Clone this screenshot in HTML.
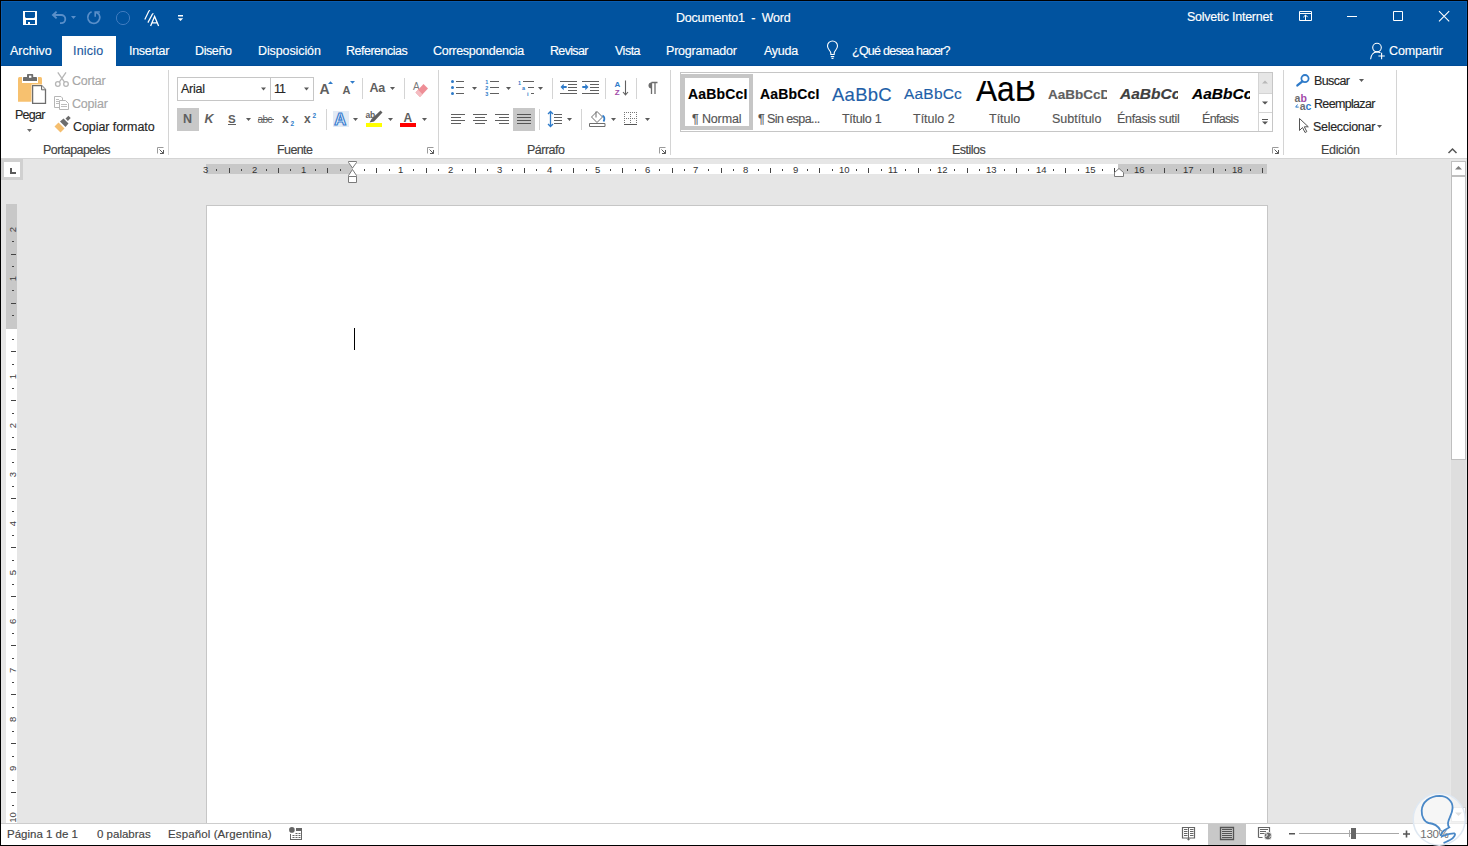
<!DOCTYPE html>
<html><head><meta charset="utf-8"><title>Documento1 - Word</title>
<style>
html,body{margin:0;padding:0;}
body{width:1468px;height:846px;overflow:hidden;position:relative;background:#000;font-family:"Liberation Sans",sans-serif;}
.b{position:absolute;}
.t{position:absolute;white-space:pre;font-family:"Liberation Sans",sans-serif;-webkit-text-stroke:0.15px currentColor;}
svg{position:absolute;left:0;top:0;}
</style></head><body>
<div class=b style="left:1px;top:1px;width:1466px;height:844px;background:#ffffff;"></div>
<div class=b style="left:1px;top:1px;width:1466px;height:65px;background:#01539f;"></div>
<div class=b style="left:1px;top:1px;width:1466px;height:1px;background:#0a5cb0;"></div>
<div class=b style="left:1466px;top:1px;width:1px;height:65px;background:#0a5cb0;"></div>
<div class=b style="left:1px;top:1px;width:1px;height:65px;background:#0a5cb0;"></div>
<div class=b style="left:1px;top:65px;width:1466px;height:1px;background:#004c98;"></div>
<div class=b style="left:62px;top:36px;width:54px;height:30px;background:#ffffff;"></div>
<div class=b style="left:1px;top:158px;width:1466px;height:1px;background:#d4d4d4;"></div>
<div class=b style="left:1px;top:159px;width:1466px;height:664px;background:#e6e6e6;"></div>
<div class=b style="left:1px;top:823px;width:1466px;height:1px;background:#cdcdcd;"></div>
<div class=b style="left:1px;top:824px;width:1466px;height:21px;background:#ffffff;"></div>
<div class=b style="left:206px;top:205px;width:1062px;height:618px;background:#c6c6c6;"></div>
<div class=b style="left:207px;top:206px;width:1060px;height:617px;background:#ffffff;"></div>
<div class=b style="left:354px;top:328px;width:1px;height:22px;background:#000000;"></div>
<div class=b style="left:1px;top:159px;width:22px;height:21px;background:#d0d0d0;"></div>
<div class=b style="left:4px;top:162px;width:16px;height:15px;background:#ffffff;"></div>
<div class=b style="left:206px;top:164px;width:1061px;height:10px;background:#c8c8c8;"></div>
<div class=b style="left:353px;top:164px;width:765px;height:10px;background:#ffffff;"></div>
<div class=b style="left:6px;top:204px;width:11px;height:619px;background:#c8c8c8;"></div>
<div class=b style="left:6px;top:329px;width:11px;height:494px;background:#ffffff;"></div>
<div class=b style="left:1450px;top:159px;width:16px;height:664px;background:#e8e8e8;"></div>
<div class=b style="left:1451px;top:161px;width:15px;height:15px;background:#bfbfbf;"></div>
<div class=b style="left:1452px;top:162px;width:13px;height:13px;background:#ffffff;"></div>
<div class=b style="left:1451px;top:176px;width:15px;height:647px;background:#dedede;"></div>
<div class=b style="left:1451px;top:176px;width:15px;height:284px;background:#bfbfbf;"></div>
<div class=b style="left:1452px;top:177px;width:13px;height:282px;background:#ffffff;"></div>
<div class=b style="left:1451px;top:807px;width:15px;height:15px;background:#cfcfcf;"></div>
<div class=b style="left:1452px;top:808px;width:13px;height:13px;background:#ffffff;"></div>
<div class=b style="left:168px;top:70px;width:1px;height:85px;background:#d4d4d4;"></div>
<div class=b style="left:438px;top:70px;width:1px;height:85px;background:#d4d4d4;"></div>
<div class=b style="left:670px;top:70px;width:1px;height:85px;background:#d4d4d4;"></div>
<div class=b style="left:1283px;top:70px;width:1px;height:85px;background:#d4d4d4;"></div>
<div class=b style="left:1396px;top:70px;width:1px;height:85px;background:#d4d4d4;"></div>
<div class=b style="left:362px;top:78px;width:1px;height:21px;background:#d4d4d4;"></div>
<div class=b style="left:404px;top:78px;width:1px;height:21px;background:#d4d4d4;"></div>
<div class=b style="left:326px;top:109px;width:1px;height:21px;background:#d4d4d4;"></div>
<div class=b style="left:552px;top:78px;width:1px;height:21px;background:#d4d4d4;"></div>
<div class=b style="left:605px;top:78px;width:1px;height:21px;background:#d4d4d4;"></div>
<div class=b style="left:636px;top:78px;width:1px;height:21px;background:#d4d4d4;"></div>
<div class=b style="left:539px;top:109px;width:1px;height:21px;background:#d4d4d4;"></div>
<div class=b style="left:581px;top:109px;width:1px;height:21px;background:#d4d4d4;"></div>
<div class=b style="left:177px;top:77px;width:94px;height:24px;background:#c6c6c6;"></div>
<div class=b style="left:178px;top:78px;width:92px;height:22px;background:#ffffff;"></div>
<div class=b style="left:270px;top:77px;width:44px;height:24px;background:#c6c6c6;"></div>
<div class=b style="left:271px;top:78px;width:42px;height:22px;background:#ffffff;"></div>
<div class=b style="left:177px;top:108px;width:22px;height:23px;background:#c8c8c8;"></div>
<div class=b style="left:513px;top:108px;width:22px;height:23px;background:#c8c8c8;"></div>
<div class=b style="left:680px;top:72px;width:593px;height:60px;background:#c6c6c6;"></div>
<div class=b style="left:681px;top:73px;width:591px;height:58px;background:#ffffff;"></div>
<div class=b style="left:681px;top:74px;width:72px;height:56px;background:#c6c6c6;"></div>
<div class=b style="left:685px;top:78px;width:64px;height:48px;background:#ffffff;"></div>
<div class=b style="left:1258px;top:73px;width:1px;height:58px;background:#d4d4d4;"></div>
<div class=b style="left:1259px;top:73px;width:13px;height:21px;background:#e6e6e6;"></div>
<div class=b style="left:1259px;top:93px;width:13px;height:1px;background:#d4d4d4;"></div>
<div class=b style="left:1259px;top:112px;width:13px;height:1px;background:#d4d4d4;"></div>
<div class=b style="left:1208px;top:824px;width:38px;height:21px;background:#c8c8c8;"></div>
<svg width="1468" height="846" viewBox="0 0 1468 846" shape-rendering="auto">
<rect x="23" y="11" width="14" height="14" fill="#ffffff"/>
<path d="M25 12h10v5l-1 1h-8l-1-1z" fill="#01539f" />
<rect x="26" y="20" width="9" height="4" fill="#01539f"/>
<rect x="28" y="22" width="2" height="2" fill="#ffffff"/>
<path d="M53 15h8.2a4.1 4.1 0 0 1 0 8.2h-1.2" fill="none" stroke="#5a8fc9" stroke-width="1.8" />
<path d="M56.6 11.6l-3.6 3.4 3.6 3.4" fill="none" stroke="#5a8fc9" stroke-width="1.9" />
<path d="M71 16h5l-2.5 3z" fill="#5a8fc9" />
<path d="M91.6 11.8A6 6 0 1 0 99 14.4L96.2 12.4" fill="none" stroke="#5a8fc9" stroke-width="1.7" />
<path d="M95.2 16.8V12H99.8" fill="none" stroke="#5a8fc9" stroke-width="1.6" />
<circle cx="123" cy="18" r="6.6" fill="none" stroke="#3f7bbf" stroke-width="1"/>
<path d="M144.8 19.5l4-8.2c.3-.6.8-.8 1.2-.5" fill="none" stroke="#ffffff" stroke-width="1.2" />
<path d="M147.9 22.6l4.4-8.2c.3-.6.8-.8 1.2-.5" fill="none" stroke="#ffffff" stroke-width="1.2" />
<path d="M150.6 26l4-9.5 4 9.5M151.9 22.8h5.4" fill="none" stroke="#ffffff" stroke-width="1.3" />
<rect x="178" y="15" width="5" height="1.5" fill="#ffffff"/>
<path d="M177.8 18.2h5.4l-2.7 2.9z" fill="#ffffff" />
<path d="M1299.5 11.5h12v9h-12zM1299.5 13.5h12" fill="none" stroke="#ffffff" stroke-width="1" />
<path d="M1305.5 20v-5M1303.3 17.2l2.2-2.2 2.2 2.2" fill="none" stroke="#ffffff" stroke-width="1" />
<rect x="1347" y="16" width="10" height="1" fill="#ffffff"/>
<path d="M1393.5 11.5h9v9h-9z" fill="none" stroke="#ffffff" stroke-width="1" />
<path d="M1439 11.2l10.2 10.2M1449.2 11.2l-10.2 10.2" fill="none" stroke="#ffffff" stroke-width="1.1" />
<path d="M830.8 54.5v-1.6c0-1.8-3.3-3.6-3.3-6.9a5 5 0 0 1 10 0c0 3.3-3.3 5.1-3.3 6.9v1.6z" fill="none" stroke="#ffffff" stroke-width="1.1" />
<path d="M830.8 56.6h3.4M831.5 58.5h2" fill="none" stroke="#ffffff" stroke-width="1.1" />
<circle cx="1377" cy="47.6" r="4.3" fill="none" stroke="#ffffff" stroke-width="1.1"/>
<path d="M1370.6 59.2c.4-4.6 3.2-7.3 6.4-7.3 1.3 0 2.5.3 3.4.9" fill="none" stroke="#ffffff" stroke-width="1.1" />
<path d="M1381.6 52.8v6.4M1378.4 56h6.4" fill="none" stroke="#ffffff" stroke-width="1.1" />
<path d="M19.5 77h21a1.5 1.5 0 0 1 1.5 1.5v23.3h-24v-23.3a1.5 1.5 0 0 1 1.5-1.5z" fill="#f7c16f" />
<rect x="22" y="77" width="16" height="6" fill="#ffffff"/>
<path d="M23 81v-3.2c0-.5.3-.8.8-.8h3.2v-2.2c0-.4.3-.8.8-.8h4.6c.4 0 .8.4.8.8v2.2h3c.5 0 .8.3.8.8v3.2z" fill="#6d6d6d" />
<rect x="29" y="75.6" width="2.4" height="2.2" fill="#ffffff"/>
<path d="M31.5 84.5h10.5l4.5 4.5v15.5h-15z" fill="#ffffff" />
<path d="M32.6 85.6h9.1l3.8 3.8v14h-12.9z" fill="#ffffff" stroke="#6d6d6d" stroke-width="1.3" />
<path d="M41.5 85.6v4.2h4.2" fill="#e8e8e8" stroke="#6d6d6d" stroke-width="1" />
<path d="M27 129h5l-2.5 3z" fill="#6d6d6d" />
<circle cx="57.8" cy="84" r="2.3" fill="none" stroke="#b6b6b6" stroke-width="1.3"/><circle cx="66" cy="84" r="2.3" fill="none" stroke="#b6b6b6" stroke-width="1.3"/>
<path d="M59.3 82.2l6.7-9.8M64.5 82.2l-6.7-9.8" fill="none" stroke="#b6b6b6" stroke-width="1.3" />
<path d="M54.5 96.5h6.5l1.5 1.5v9.5h-8z" fill="#ffffff" stroke="#b6b6b6" stroke-width="1" />
<path d="M59.5 100.5h6l3 3v6h-9z" fill="#ffffff" stroke="#b6b6b6" stroke-width="1" />
<path d="M61 104.5h6M61 106.5h6M56 99.5h3M56 101.5h3M56 103.5h3" fill="none" stroke="#b6b6b6" stroke-width="0.9" />
<path d="M54.5 126.5l4-4 6 6-4 4z" fill="#f5be6e" />
<path d="M60 121.5l3.5-3 5 5-3 3.5z" fill="#6d6d6d" />
<path d="M65.5 118.5l3-2.8 2.2 2.2-2.8 3z" fill="#6d6d6d" />
<path d="M157.5 153.5v-6h6" fill="none" stroke="#9a9a9a" stroke-width="1" />
<path d="M159.5 149.5l4 4M163.5 150v3.5h-3.5" fill="none" stroke="#5a5a5a" stroke-width="1" />
<path d="M427.5 153.5v-6h6" fill="none" stroke="#9a9a9a" stroke-width="1" />
<path d="M429.5 149.5l4 4M433.5 150v3.5h-3.5" fill="none" stroke="#5a5a5a" stroke-width="1" />
<path d="M659.5 153.5v-6h6" fill="none" stroke="#9a9a9a" stroke-width="1" />
<path d="M661.5 149.5l4 4M665.5 150v3.5h-3.5" fill="none" stroke="#5a5a5a" stroke-width="1" />
<path d="M1272.5 153.5v-6h6" fill="none" stroke="#9a9a9a" stroke-width="1" />
<path d="M1274.5 149.5l4 4M1278.5 150v3.5h-3.5" fill="none" stroke="#5a5a5a" stroke-width="1" />
<path d="M261 87.5h5l-2.5 2.9z" fill="#5a5a5a" />
<path d="M304 87.5h5l-2.5 2.9z" fill="#5a5a5a" />
<path d="M390 87h5l-2.5 2.9z" fill="#5a5a5a" />
<path d="M246 118h5l-2.5 2.9z" fill="#5a5a5a" />
<path d="M353 118h5l-2.5 2.9z" fill="#5a5a5a" />
<path d="M388 118h5l-2.5 2.9z" fill="#5a5a5a" />
<path d="M422 118h5l-2.5 2.9z" fill="#5a5a5a" />
<path d="M472 87h5l-2.5 2.9z" fill="#5a5a5a" />
<path d="M506 87h5l-2.5 2.9z" fill="#5a5a5a" />
<path d="M538 87h5l-2.5 2.9z" fill="#5a5a5a" />
<path d="M567 118h5l-2.5 2.9z" fill="#5a5a5a" />
<path d="M611 118h5l-2.5 2.9z" fill="#5a5a5a" />
<path d="M645 118h5l-2.5 2.9z" fill="#5a5a5a" />
<path d="M1359 79h5l-2.5 2.9z" fill="#5a5a5a" />
<path d="M1377 125h5l-2.5 2.9z" fill="#5a5a5a" />
<text x="319.6" y="94" font-family="Liberation Sans" font-size="14" font-weight="700" font-style="normal" fill="#5f5f5f" letter-spacing="0">A</text>
<path d="M328 84h5l-2.5-2.8z" fill="#2f7bc9" />
<text x="342.6" y="94" font-family="Liberation Sans" font-size="11" font-weight="700" font-style="normal" fill="#5f5f5f" letter-spacing="0">A</text>
<path d="M350 81h5l-2.5 2.8z" fill="#2f7bc9" />
<text x="369.6" y="92" font-family="Liberation Sans" font-size="12.5" font-weight="700" font-style="normal" fill="#5f5f5f" letter-spacing="-0.3">Aa</text>
<text x="413" y="89.5" font-family="Liberation Sans" font-size="10" font-weight="400" font-style="normal" fill="#7a7a7a" letter-spacing="0">A</text>
<path d="M415.5 92.5l8-8.5 4.5 4.5-8 8.5z" fill="#ee8e96" />
<path d="M415.5 92.5l2.6-2.7 4.4 4.4-2.6 2.7z" fill="#f4bcc1" />
<text x="183" y="123" font-family="Liberation Sans" font-size="12.5" font-weight="700" font-style="normal" fill="#5f5f5f" letter-spacing="0">N</text>
<text x="204.5" y="123" font-family="Liberation Sans" font-size="12.5" font-weight="700" font-style="italic" fill="#5f5f5f" letter-spacing="0">K</text>
<text x="228" y="123" font-family="Liberation Sans" font-size="11.5" font-weight="700" font-style="normal" fill="#5f5f5f" letter-spacing="0">S</text>
<rect x="228" y="124" width="8" height="1" fill="#5f5f5f"/>
<text x="257.5" y="123" font-family="Liberation Sans" font-size="10" font-weight="400" font-style="normal" fill="#5f5f5f" letter-spacing="-0.6">abc</text>
<rect x="258" y="119" width="16" height="1" fill="#5f5f5f"/>
<text x="282" y="123" font-family="Liberation Sans" font-size="12" font-weight="700" font-style="normal" fill="#5f5f5f" letter-spacing="0">x</text>
<text x="290.5" y="125.5" font-family="Liberation Sans" font-size="6.5" font-weight="700" font-style="normal" fill="#2f7bc9" letter-spacing="0">2</text>
<text x="304" y="123" font-family="Liberation Sans" font-size="12" font-weight="700" font-style="normal" fill="#5f5f5f" letter-spacing="0">x</text>
<text x="312.5" y="117.5" font-family="Liberation Sans" font-size="6.5" font-weight="700" font-style="normal" fill="#2f7bc9" letter-spacing="0">2</text>
<rect x="333" y="111" width="16" height="16" fill="#e3ebf5"/>
<text x="334.2" y="125" font-family="Liberation Sans" font-size="16.5" font-weight="700" fill="#ffffff" stroke="#3b7fd0" stroke-width="1.2">A</text>
<text x="365.6" y="117.8" font-family="Liberation Sans" font-size="8.5" font-weight="700" font-style="normal" fill="#5f5f5f" letter-spacing="-0.4">ab</text>
<path d="M369.5 122.5l2-3.5 9-8.5 2 2-8.5 9z" fill="#5f5f5f" />
<rect x="366" y="123" width="16" height="4" fill="#ffff00"/>
<text x="403.5" y="122" font-family="Liberation Sans" font-size="12" font-weight="700" font-style="normal" fill="#5f5f5f" letter-spacing="0">A</text>
<rect x="400" y="123" width="16" height="4" fill="#ff0000"/>
<circle cx="452.5" cy="81.5" r="1.5" fill="#2f7bc9"/>
<circle cx="452.5" cy="87.5" r="1.5" fill="#2f7bc9"/>
<circle cx="452.5" cy="93.5" r="1.5" fill="#2f7bc9"/>
<rect x="456" y="81" width="8" height="1" fill="#606060"/>
<rect x="456" y="87" width="8" height="1" fill="#606060"/>
<rect x="456" y="93" width="8" height="1" fill="#606060"/>
<text x="485.2" y="84" font-family="Liberation Sans" font-size="5.5" font-weight="700" font-style="normal" fill="#2f7bc9" letter-spacing="0">1</text>
<text x="485.2" y="90" font-family="Liberation Sans" font-size="5.5" font-weight="700" font-style="normal" fill="#2f7bc9" letter-spacing="0">2</text>
<text x="485.2" y="96" font-family="Liberation Sans" font-size="5.5" font-weight="700" font-style="normal" fill="#2f7bc9" letter-spacing="0">3</text>
<rect x="490" y="81" width="9" height="1" fill="#606060"/>
<rect x="490" y="87" width="9" height="1" fill="#606060"/>
<rect x="490" y="93" width="9" height="1" fill="#606060"/>
<text x="518" y="84.5" font-family="Liberation Sans" font-size="5.5" font-weight="700" font-style="normal" fill="#2f7bc9" letter-spacing="0">1</text>
<text x="522" y="90" font-family="Liberation Sans" font-size="5.5" font-weight="700" font-style="normal" fill="#2f7bc9" letter-spacing="0">a</text>
<text x="527" y="96" font-family="Liberation Sans" font-size="5.5" font-weight="700" font-style="normal" fill="#2f7bc9" letter-spacing="0">i</text>
<rect x="523" y="81" width="11" height="1" fill="#606060"/>
<rect x="528" y="87" width="6" height="1" fill="#606060"/>
<rect x="531" y="93" width="3" height="1" fill="#606060"/>
<rect x="560" y="81" width="17" height="1" fill="#606060"/>
<rect x="560" y="93" width="17" height="1" fill="#606060"/>
<rect x="568" y="84" width="9" height="1" fill="#606060"/>
<rect x="568" y="87" width="9" height="1" fill="#606060"/>
<rect x="568" y="90" width="9" height="1" fill="#606060"/>
<path d="M560.5 87l3.2-3.2v2.2h3v2h-3v2.2z" fill="#2f7bc9" />
<rect x="582" y="81" width="17" height="1" fill="#606060"/>
<rect x="582" y="93" width="17" height="1" fill="#606060"/>
<rect x="590" y="84" width="9" height="1" fill="#606060"/>
<rect x="590" y="87" width="9" height="1" fill="#606060"/>
<rect x="590" y="90" width="9" height="1" fill="#606060"/>
<path d="M588.5 87l-3.2-3.2v2.2h-3v2h3v2.2z" fill="#2f7bc9" />
<text x="614.6" y="86.8" font-family="Liberation Sans" font-size="8" font-weight="700" font-style="normal" fill="#2f7bc9" letter-spacing="0">A</text>
<text x="614.8" y="94.8" font-family="Liberation Sans" font-size="8" font-weight="700" font-style="normal" fill="#a14aa8" letter-spacing="0">Z</text>
<path d="M625.5 80.5v14M623 92l2.5 2.8 2.5-2.8" fill="none" stroke="#606060" stroke-width="1.1" />
<path d="M651.5 82.5h6M651.5 82.5v11.5M655 82.5v11.5" fill="none" stroke="#6d6d6d" stroke-width="1.3" />
<path d="M651.5 82.5a3 3 0 0 0 0 6z" fill="#6d6d6d" />
<rect x="451" y="114" width="14" height="1" fill="#606060"/>
<rect x="451" y="120" width="14" height="1" fill="#606060"/>
<rect x="451" y="117" width="10" height="1" fill="#606060"/>
<rect x="451" y="123" width="10" height="1" fill="#606060"/>
<rect x="473" y="114" width="14" height="1" fill="#606060"/>
<rect x="473" y="120" width="14" height="1" fill="#606060"/>
<rect x="475" y="117" width="10" height="1" fill="#606060"/>
<rect x="475" y="123" width="10" height="1" fill="#606060"/>
<rect x="495" y="114" width="14" height="1" fill="#606060"/>
<rect x="495" y="120" width="14" height="1" fill="#606060"/>
<rect x="499" y="117" width="10" height="1" fill="#606060"/>
<rect x="499" y="123" width="10" height="1" fill="#606060"/>
<rect x="517" y="114" width="14" height="1" fill="#555"/>
<rect x="517" y="117" width="14" height="1" fill="#555"/>
<rect x="517" y="120" width="14" height="1" fill="#555"/>
<rect x="517" y="123" width="14" height="1" fill="#555"/>
<path d="M550.5 111.5v15M548 114l2.5-2.5 2.5 2.5M548 124l2.5 2.5 2.5-2.5" fill="none" stroke="#2f7bc9" stroke-width="1.3" />
<rect x="554" y="114" width="8" height="1" fill="#606060"/>
<rect x="554" y="117" width="8" height="1" fill="#606060"/>
<rect x="554" y="120" width="8" height="1" fill="#606060"/>
<rect x="554" y="123" width="8" height="1" fill="#606060"/>
<path d="M591.5 117l5.5-5.5 5.5 5.5-5.5 5.5z" fill="#ffffff" stroke="#6d6d6d" stroke-width="1" />
<path d="M596 111.5v6" fill="none" stroke="#6d6d6d" stroke-width="1" />
<path d="M602.5 115.5c2 1 2.5 3.5 1 6" fill="none" stroke="#2f7bc9" stroke-width="1.8" />
<path d="M589.5 123.5h15.5v3h-15.5z" fill="#ffffff" stroke="#6d6d6d" stroke-width="1" />
<rect x="624" y="112" width="1" height="1" fill="#777"/>
<rect x="626" y="112" width="1" height="1" fill="#777"/>
<rect x="628" y="112" width="1" height="1" fill="#777"/>
<rect x="630" y="112" width="1" height="1" fill="#777"/>
<rect x="632" y="112" width="1" height="1" fill="#777"/>
<rect x="634" y="112" width="1" height="1" fill="#777"/>
<rect x="636" y="112" width="1" height="1" fill="#777"/>
<rect x="624" y="114" width="1" height="1" fill="#777"/>
<rect x="630" y="114" width="1" height="1" fill="#777"/>
<rect x="636" y="114" width="1" height="1" fill="#777"/>
<rect x="624" y="116" width="1" height="1" fill="#777"/>
<rect x="630" y="116" width="1" height="1" fill="#777"/>
<rect x="636" y="116" width="1" height="1" fill="#777"/>
<rect x="624" y="118" width="1" height="1" fill="#777"/>
<rect x="626" y="118" width="1" height="1" fill="#777"/>
<rect x="628" y="118" width="1" height="1" fill="#777"/>
<rect x="630" y="118" width="1" height="1" fill="#777"/>
<rect x="632" y="118" width="1" height="1" fill="#777"/>
<rect x="634" y="118" width="1" height="1" fill="#777"/>
<rect x="636" y="118" width="1" height="1" fill="#777"/>
<rect x="624" y="120" width="1" height="1" fill="#777"/>
<rect x="630" y="120" width="1" height="1" fill="#777"/>
<rect x="636" y="120" width="1" height="1" fill="#777"/>
<rect x="624" y="122" width="1" height="1" fill="#777"/>
<rect x="630" y="122" width="1" height="1" fill="#777"/>
<rect x="636" y="122" width="1" height="1" fill="#777"/>
<rect x="624" y="124" width="13" height="1" fill="#555"/>
<path d="M1262 83.5h6l-3-3z" fill="#b8b8b8" />
<path d="M1262 101.5h6l-3 3z" fill="#555" />
<rect x="1262" y="119" width="6" height="1" fill="#555"/>
<path d="M1262 121.5h6l-3 3z" fill="#555" />
<circle cx="1305" cy="78.6" r="3.6" fill="none" stroke="#2f7bc9" stroke-width="1.8"/>
<path d="M1302.4 81.4l-5 4" fill="none" stroke="#2f7bc9" stroke-width="2.4" stroke-linecap="round"/>
<text x="1294.6" y="102.4" font-family="Liberation Sans" font-size="10.5" font-weight="700" font-style="normal" fill="#6d6d6d" letter-spacing="0">a</text>
<text x="1300.6" y="102.4" font-family="Liberation Sans" font-size="10.5" font-weight="700" font-style="normal" fill="#a14aa8" letter-spacing="0">b</text>
<text x="1299.8" y="109.8" font-family="Liberation Sans" font-size="10.5" font-weight="700" font-style="normal" fill="#6d6d6d" letter-spacing="0">a</text>
<text x="1305.6" y="109.8" font-family="Liberation Sans" font-size="10.5" font-weight="700" font-style="normal" fill="#2f7bc9" letter-spacing="0">c</text>
<path d="M1297.5 104.5l-1.8 2.6h3" fill="none" stroke="#2f7bc9" stroke-width="1" />
<path d="M1299.5 118.5v12l3-3 2.5 5 1.8-.9-2.5-4.8h4z" fill="#ffffff" stroke="#555" stroke-width="1" />
<path d="M1448.5 153l4-4 4 4" fill="none" stroke="#555" stroke-width="1.5" />
<rect x="10" y="168" width="2" height="6" fill="#5a5a5a"/>
<rect x="10" y="172" width="6" height="2" fill="#5a5a5a"/>
<rect x="216" y="169" width="1" height="2" fill="#444"/>
<rect x="229" y="168" width="1" height="5" fill="#444"/>
<rect x="241" y="169" width="1" height="2" fill="#444"/>
<rect x="266" y="169" width="1" height="2" fill="#444"/>
<rect x="278" y="168" width="1" height="5" fill="#444"/>
<rect x="290" y="169" width="1" height="2" fill="#444"/>
<rect x="315" y="169" width="1" height="2" fill="#444"/>
<rect x="327" y="168" width="1" height="5" fill="#444"/>
<rect x="340" y="169" width="1" height="2" fill="#444"/>
<rect x="364" y="169" width="1" height="2" fill="#444"/>
<rect x="376" y="168" width="1" height="5" fill="#444"/>
<rect x="389" y="169" width="1" height="2" fill="#444"/>
<rect x="413" y="169" width="1" height="2" fill="#444"/>
<rect x="426" y="168" width="1" height="5" fill="#444"/>
<rect x="438" y="169" width="1" height="2" fill="#444"/>
<rect x="462" y="169" width="1" height="2" fill="#444"/>
<rect x="475" y="168" width="1" height="5" fill="#444"/>
<rect x="487" y="169" width="1" height="2" fill="#444"/>
<rect x="512" y="169" width="1" height="2" fill="#444"/>
<rect x="524" y="168" width="1" height="5" fill="#444"/>
<rect x="536" y="169" width="1" height="2" fill="#444"/>
<rect x="561" y="169" width="1" height="2" fill="#444"/>
<rect x="573" y="168" width="1" height="5" fill="#444"/>
<rect x="586" y="169" width="1" height="2" fill="#444"/>
<rect x="610" y="169" width="1" height="2" fill="#444"/>
<rect x="622" y="168" width="1" height="5" fill="#444"/>
<rect x="635" y="169" width="1" height="2" fill="#444"/>
<rect x="659" y="169" width="1" height="2" fill="#444"/>
<rect x="672" y="168" width="1" height="5" fill="#444"/>
<rect x="684" y="169" width="1" height="2" fill="#444"/>
<rect x="708" y="169" width="1" height="2" fill="#444"/>
<rect x="721" y="168" width="1" height="5" fill="#444"/>
<rect x="733" y="169" width="1" height="2" fill="#444"/>
<rect x="758" y="169" width="1" height="2" fill="#444"/>
<rect x="770" y="168" width="1" height="5" fill="#444"/>
<rect x="782" y="169" width="1" height="2" fill="#444"/>
<rect x="807" y="169" width="1" height="2" fill="#444"/>
<rect x="819" y="168" width="1" height="5" fill="#444"/>
<rect x="832" y="169" width="1" height="2" fill="#444"/>
<rect x="856" y="169" width="1" height="2" fill="#444"/>
<rect x="868" y="168" width="1" height="5" fill="#444"/>
<rect x="881" y="169" width="1" height="2" fill="#444"/>
<rect x="905" y="169" width="1" height="2" fill="#444"/>
<rect x="918" y="168" width="1" height="5" fill="#444"/>
<rect x="930" y="169" width="1" height="2" fill="#444"/>
<rect x="954" y="169" width="1" height="2" fill="#444"/>
<rect x="967" y="168" width="1" height="5" fill="#444"/>
<rect x="979" y="169" width="1" height="2" fill="#444"/>
<rect x="1004" y="169" width="1" height="2" fill="#444"/>
<rect x="1016" y="168" width="1" height="5" fill="#444"/>
<rect x="1028" y="169" width="1" height="2" fill="#444"/>
<rect x="1053" y="169" width="1" height="2" fill="#444"/>
<rect x="1065" y="168" width="1" height="5" fill="#444"/>
<rect x="1078" y="169" width="1" height="2" fill="#444"/>
<rect x="1102" y="169" width="1" height="2" fill="#444"/>
<rect x="1114" y="168" width="1" height="5" fill="#444"/>
<rect x="1127" y="169" width="1" height="2" fill="#444"/>
<rect x="1151" y="169" width="1" height="2" fill="#444"/>
<rect x="1164" y="168" width="1" height="5" fill="#444"/>
<rect x="1176" y="169" width="1" height="2" fill="#444"/>
<rect x="1200" y="169" width="1" height="2" fill="#444"/>
<rect x="1213" y="168" width="1" height="5" fill="#444"/>
<rect x="1225" y="169" width="1" height="2" fill="#444"/>
<rect x="1250" y="169" width="1" height="2" fill="#444"/>
<rect x="1262" y="168" width="1" height="5" fill="#444"/>
<path d="M348.5 161.5h8v1l-4 5.5-4-5.5z" fill="#ffffff" stroke="#7a7a7a" stroke-width="1" />
<path d="M348.5 175.5l4-6 4 6v1h-8z" fill="#ffffff" stroke="#7a7a7a" stroke-width="1" />
<path d="M348.5 176.5h8v6h-8z" fill="#ffffff" stroke="#7a7a7a" stroke-width="1" />
<path d="M1114.5 176.5v-4l4.5-4 4.5 4v4z" fill="#ffffff" stroke="#7a7a7a" stroke-width="1" />
<rect x="12" y="241" width="2" height="1" fill="#444"/>
<rect x="11" y="254" width="5" height="1" fill="#444"/>
<rect x="12" y="266" width="2" height="1" fill="#444"/>
<rect x="12" y="290" width="2" height="1" fill="#444"/>
<rect x="11" y="303" width="5" height="1" fill="#444"/>
<rect x="12" y="315" width="2" height="1" fill="#444"/>
<rect x="12" y="339" width="2" height="1" fill="#444"/>
<rect x="11" y="351" width="5" height="1" fill="#444"/>
<rect x="12" y="364" width="2" height="1" fill="#444"/>
<rect x="12" y="388" width="2" height="1" fill="#444"/>
<rect x="11" y="400" width="5" height="1" fill="#444"/>
<rect x="12" y="413" width="2" height="1" fill="#444"/>
<rect x="12" y="437" width="2" height="1" fill="#444"/>
<rect x="11" y="449" width="5" height="1" fill="#444"/>
<rect x="12" y="462" width="2" height="1" fill="#444"/>
<rect x="12" y="486" width="2" height="1" fill="#444"/>
<rect x="11" y="498" width="5" height="1" fill="#444"/>
<rect x="12" y="511" width="2" height="1" fill="#444"/>
<rect x="12" y="535" width="2" height="1" fill="#444"/>
<rect x="11" y="547" width="5" height="1" fill="#444"/>
<rect x="12" y="560" width="2" height="1" fill="#444"/>
<rect x="12" y="584" width="2" height="1" fill="#444"/>
<rect x="11" y="596" width="5" height="1" fill="#444"/>
<rect x="12" y="609" width="2" height="1" fill="#444"/>
<rect x="12" y="633" width="2" height="1" fill="#444"/>
<rect x="11" y="645" width="5" height="1" fill="#444"/>
<rect x="12" y="658" width="2" height="1" fill="#444"/>
<rect x="12" y="682" width="2" height="1" fill="#444"/>
<rect x="11" y="694" width="5" height="1" fill="#444"/>
<rect x="12" y="707" width="2" height="1" fill="#444"/>
<rect x="12" y="731" width="2" height="1" fill="#444"/>
<rect x="11" y="743" width="5" height="1" fill="#444"/>
<rect x="12" y="756" width="2" height="1" fill="#444"/>
<rect x="12" y="780" width="2" height="1" fill="#444"/>
<rect x="11" y="792" width="5" height="1" fill="#444"/>
<rect x="12" y="805" width="2" height="1" fill="#444"/>
<path d="M1455 169.5h7l-3.5-3.5z" fill="#7f7f7f" />
<path d="M1455 812.5h7l-3.5 3.5z" fill="#b0b0b0" />
<path d="M1182.5 827.5h12v10.5h-12z" fill="#ffffff" stroke="#666" stroke-width="1.2" />
<path d="M1188.5 827v13" fill="none" stroke="#666" stroke-width="1" />
<rect x="1184" y="829" width="3.5" height="1" fill="#666"/>
<rect x="1190" y="829" width="3.5" height="1" fill="#666"/>
<rect x="1184" y="831" width="3.5" height="1" fill="#666"/>
<rect x="1190" y="831" width="3.5" height="1" fill="#666"/>
<rect x="1184" y="833" width="3.5" height="1" fill="#666"/>
<rect x="1190" y="833" width="3.5" height="1" fill="#666"/>
<rect x="1184" y="835" width="3.5" height="1" fill="#666"/>
<rect x="1190" y="835" width="3.5" height="1" fill="#666"/>
<path d="M1187 838.5l1.5 1.8 1.5-1.8" fill="none" stroke="#666" stroke-width="0.9" />
<path d="M1220.5 827.5h13v12h-13z" fill="none" stroke="#555" stroke-width="1.3" />
<rect x="1222" y="829" width="10" height="1" fill="#555"/>
<rect x="1222" y="831" width="10" height="1" fill="#555"/>
<rect x="1222" y="833" width="10" height="1" fill="#555"/>
<rect x="1222" y="835" width="10" height="1" fill="#555"/>
<rect x="1222" y="837" width="10" height="1" fill="#555"/>
<path d="M1258.5 837.5v-10h11v5M1258.5 837.5h4" fill="none" stroke="#666" stroke-width="1.2" />
<rect x="1260" y="829" width="8" height="1" fill="#666"/>
<rect x="1260" y="831" width="6" height="1" fill="#666"/>
<rect x="1260" y="833" width="5" height="1" fill="#666"/>
<circle cx="1268" cy="836" r="3.9" fill="#6a6a6a" stroke="#fff" stroke-width=".8"/>
<path d="M1266 833.5c1.2.3 1.6 1.4 1 2.4l-1.5.6M1269.5 837.5c0-.8.8-1.6 1.8-1.4" fill="none" stroke="#ffffff" stroke-width="0.9" />
<rect x="1289" y="833" width="6" height="1.5" fill="#555"/>
<rect x="1299" y="833" width="100" height="1" fill="#a8a8a8"/>
<rect x="1349" y="830" width="1" height="7" fill="#a8a8a8"/>
<rect x="1351" y="828" width="5" height="11" fill="#666"/>
<path d="M1403 834h7M1406.5 830.5v7" fill="none" stroke="#555" stroke-width="1.6" />
<circle cx="291.9" cy="829.9" r="2.8" fill="#666"/>
<rect x="296" y="828" width="6" height="3" fill="#666"/>
<rect x="301" y="828" width="1" height="12" fill="#666"/>
<rect x="290" y="834" width="1" height="6" fill="#666"/>
<rect x="290" y="839" width="12" height="1" fill="#666"/>
<rect x="295.5" y="833" width="2" height="1" fill="#666"/>
<rect x="298.5" y="833" width="2" height="1" fill="#666"/>
<rect x="292.5" y="835" width="2" height="1" fill="#666"/>
<rect x="295.5" y="835" width="2" height="1" fill="#666"/>
<rect x="298.5" y="835" width="2" height="1" fill="#666"/>
<rect x="292.5" y="837" width="2" height="1" fill="#666"/>
<rect x="295.5" y="837" width="2" height="1" fill="#666"/>
<rect x="298.5" y="837" width="2" height="1" fill="#666"/>
<text transform="translate(16.3,229.5) rotate(-90)" text-anchor="middle" font-family="Liberation Sans" font-size="9.5" fill="#3a3a3a">2</text>
<text transform="translate(16.3,278.5) rotate(-90)" text-anchor="middle" font-family="Liberation Sans" font-size="9.5" fill="#3a3a3a">1</text>
<text transform="translate(16.3,376.5) rotate(-90)" text-anchor="middle" font-family="Liberation Sans" font-size="9.5" fill="#3a3a3a">1</text>
<text transform="translate(16.3,425.5) rotate(-90)" text-anchor="middle" font-family="Liberation Sans" font-size="9.5" fill="#3a3a3a">2</text>
<text transform="translate(16.3,474.5) rotate(-90)" text-anchor="middle" font-family="Liberation Sans" font-size="9.5" fill="#3a3a3a">3</text>
<text transform="translate(16.3,523.5) rotate(-90)" text-anchor="middle" font-family="Liberation Sans" font-size="9.5" fill="#3a3a3a">4</text>
<text transform="translate(16.3,572.5) rotate(-90)" text-anchor="middle" font-family="Liberation Sans" font-size="9.5" fill="#3a3a3a">5</text>
<text transform="translate(16.3,621.4) rotate(-90)" text-anchor="middle" font-family="Liberation Sans" font-size="9.5" fill="#3a3a3a">6</text>
<text transform="translate(16.3,670.4) rotate(-90)" text-anchor="middle" font-family="Liberation Sans" font-size="9.5" fill="#3a3a3a">7</text>
<text transform="translate(16.3,719.4) rotate(-90)" text-anchor="middle" font-family="Liberation Sans" font-size="9.5" fill="#3a3a3a">8</text>
<text transform="translate(16.3,768.4) rotate(-90)" text-anchor="middle" font-family="Liberation Sans" font-size="9.5" fill="#3a3a3a">9</text>
<text transform="translate(16.3,817.4) rotate(-90)" text-anchor="middle" font-family="Liberation Sans" font-size="9.5" fill="#3a3a3a">10</text>
</svg>
<div class=t style="left:676px;top:12px;font-size:12.5px;line-height:12.5px;color:#fff;letter-spacing:-0.22px">Documento1  -  Word</div>
<div class=t style="left:1187px;top:11px;font-size:12.5px;line-height:12.5px;color:#fff;letter-spacing:-0.25px">Solvetic Internet</div>
<div class=t style="left:10px;top:45px;font-size:12.5px;line-height:12.5px;color:#fff">Archivo</div>
<div class=t style="left:129px;top:45px;font-size:12.5px;line-height:12.5px;color:#fff;letter-spacing:-0.29px">Insertar</div>
<div class=t style="left:195px;top:45px;font-size:12.5px;line-height:12.5px;color:#fff;letter-spacing:-0.40px">Diseño</div>
<div class=t style="left:258px;top:45px;font-size:12.5px;line-height:12.5px;color:#fff;letter-spacing:-0.10px">Disposición</div>
<div class=t style="left:346px;top:45px;font-size:12.5px;line-height:12.5px;color:#fff;letter-spacing:-0.50px">Referencias</div>
<div class=t style="left:433px;top:45px;font-size:12.5px;line-height:12.5px;color:#fff;letter-spacing:-0.29px">Correspondencia</div>
<div class=t style="left:550px;top:45px;font-size:12.5px;line-height:12.5px;color:#fff;letter-spacing:-0.67px">Revisar</div>
<div class=t style="left:615px;top:45px;font-size:12.5px;line-height:12.5px;color:#fff;letter-spacing:-0.50px">Vista</div>
<div class=t style="left:666px;top:45px;font-size:12.5px;line-height:12.5px;color:#fff;letter-spacing:-0.20px">Programador</div>
<div class=t style="left:764px;top:45px;font-size:12.5px;line-height:12.5px;color:#fff;letter-spacing:-0.25px">Ayuda</div>
<div class=t style="left:852px;top:45px;font-size:12.5px;line-height:12.5px;color:#fff;letter-spacing:-0.75px">¿Qué desea hacer?</div>
<div class=t style="left:1389px;top:45px;font-size:12.5px;line-height:12.5px;color:#fff;letter-spacing:-0.12px">Compartir</div>
<div class=t style="left:73px;top:45px;font-size:12.5px;line-height:12.5px;color:#1e5aa0;letter-spacing:0.20px">Inicio</div>
<div class=t style="left:15px;top:109px;font-size:12.5px;line-height:12.5px;color:#262626;letter-spacing:-0.75px">Pegar</div>
<div class=t style="left:72px;top:75px;font-size:12.5px;line-height:12.5px;color:#a6a6a6;letter-spacing:-0.20px">Cortar</div>
<div class=t style="left:72px;top:98px;font-size:12.5px;line-height:12.5px;color:#a6a6a6;letter-spacing:-0.20px">Copiar</div>
<div class=t style="left:73px;top:121px;font-size:12.5px;line-height:12.5px;color:#262626;letter-spacing:-0.08px">Copiar formato</div>
<div class=t style="left:43px;top:144px;font-size:12.5px;line-height:12.5px;color:#444;letter-spacing:-0.55px">Portapapeles</div>
<div class=t style="left:181px;top:83px;font-size:12.5px;line-height:12.5px;color:#262626;letter-spacing:-0.25px">Arial</div>
<div class=t style="left:274px;top:83px;font-size:12.5px;line-height:12.5px;color:#262626;letter-spacing:-1.00px">11</div>
<div class=t style="left:277px;top:144px;font-size:12.5px;line-height:12.5px;color:#444;letter-spacing:-0.60px">Fuente</div>
<div class=t style="left:527px;top:144px;font-size:12.5px;line-height:12.5px;color:#444;letter-spacing:-0.50px">Párrafo</div>
<div class=t style="left:952px;top:144px;font-size:12.5px;line-height:12.5px;color:#444;letter-spacing:-0.50px">Estilos</div>
<div class=t style="left:1321px;top:144px;font-size:12.5px;line-height:12.5px;color:#444;letter-spacing:-0.33px">Edición</div>
<div class=t style="left:1314px;top:75px;font-size:12.5px;line-height:12.5px;color:#262626;letter-spacing:-0.60px">Buscar</div>
<div class=t style="left:1314px;top:98px;font-size:12.5px;line-height:12.5px;color:#262626;letter-spacing:-0.67px">Reemplazar</div>
<div class=t style="left:1313px;top:121px;font-size:12.5px;line-height:12.5px;color:#262626;letter-spacing:-0.30px">Seleccionar</div>
<div class=t style="left:688px;top:87px;font-size:14px;line-height:14px;color:#000;font-weight:700;letter-spacing:0.17px">AaBbCcI</div>
<div class=t style="left:760px;top:87px;font-size:14px;line-height:14px;color:#000;font-weight:700;letter-spacing:0.17px">AaBbCcI</div>
<div class=t style="left:832px;top:86px;font-size:18.5px;line-height:18.5px;color:#1f5fa8;letter-spacing:0.25px">AaBbC</div>
<div class=t style="left:904px;top:86px;font-size:15.5px;line-height:15.5px;color:#1f5fa8;letter-spacing:0.20px">AaBbCc</div>
<div class=b style="left:960px;top:81px;width:81px;height:30px;overflow:hidden"><div class=t style="left:16px;top:-10px;font-size:35px;line-height:35px;color:#000;transform:scaleX(0.9048);transform-origin:0px 0">AaB</div></div>
<div class=b style="left:1040px;top:80px;width:67px;height:31px;overflow:hidden"><div class=t style="left:8px;top:8px;font-size:13.5px;line-height:13.5px;color:#5f5f5f;font-weight:700">AaBbCcD</div></div>
<div class=b style="left:1110px;top:80px;width:68px;height:31px;overflow:hidden"><div class=t style="left:10px;top:6px;font-size:15.5px;line-height:15.5px;color:#404040;font-weight:700;font-style:italic">AaBbCc</div></div>
<div class=b style="left:1185px;top:80px;width:65px;height:31px;overflow:hidden"><div class=t style="left:7px;top:6px;font-size:15.5px;line-height:15.5px;color:#000;font-weight:700;font-style:italic">AaBbCc</div></div>
<div class=t style="left:692px;top:113px;font-size:12.5px;line-height:12.5px;color:#555;letter-spacing:-0.14px">¶ Normal</div>
<div class=t style="left:758px;top:113px;font-size:12.5px;line-height:12.5px;color:#555;letter-spacing:-0.58px">¶ Sin espa...</div>
<div class=t style="left:842px;top:113px;font-size:12.5px;line-height:12.5px;color:#555;letter-spacing:-0.29px">Título 1</div>
<div class=t style="left:913px;top:113px;font-size:12.5px;line-height:12.5px;color:#555">Título 2</div>
<div class=t style="left:989px;top:113px;font-size:12.5px;line-height:12.5px;color:#555">Título</div>
<div class=t style="left:1052px;top:113px;font-size:12.5px;line-height:12.5px;color:#555">Subtítulo</div>
<div class=t style="left:1117px;top:113px;font-size:12.5px;line-height:12.5px;color:#555;letter-spacing:-0.33px">Énfasis sutil</div>
<div class=t style="left:1202px;top:113px;font-size:12.5px;line-height:12.5px;color:#555;letter-spacing:-0.67px">Énfasis</div>
<div class=t style="left:203px;top:165px;font-size:9.5px;line-height:9.5px;color:#333;-webkit-text-stroke:0">3</div>
<div class=t style="left:252px;top:165px;font-size:9.5px;line-height:9.5px;color:#333;-webkit-text-stroke:0">2</div>
<div class=t style="left:301px;top:165px;font-size:9.5px;line-height:9.5px;color:#333;-webkit-text-stroke:0">1</div>
<div class=t style="left:398px;top:165px;font-size:9.5px;line-height:9.5px;color:#333;-webkit-text-stroke:0">1</div>
<div class=t style="left:448px;top:165px;font-size:9.5px;line-height:9.5px;color:#333;-webkit-text-stroke:0">2</div>
<div class=t style="left:497px;top:165px;font-size:9.5px;line-height:9.5px;color:#333;-webkit-text-stroke:0">3</div>
<div class=t style="left:547px;top:165px;font-size:9.5px;line-height:9.5px;color:#333;-webkit-text-stroke:0">4</div>
<div class=t style="left:595px;top:165px;font-size:9.5px;line-height:9.5px;color:#333;-webkit-text-stroke:0">5</div>
<div class=t style="left:645px;top:165px;font-size:9.5px;line-height:9.5px;color:#333;-webkit-text-stroke:0">6</div>
<div class=t style="left:693px;top:165px;font-size:9.5px;line-height:9.5px;color:#333;-webkit-text-stroke:0">7</div>
<div class=t style="left:743px;top:165px;font-size:9.5px;line-height:9.5px;color:#333;-webkit-text-stroke:0">8</div>
<div class=t style="left:793px;top:165px;font-size:9.5px;line-height:9.5px;color:#333;-webkit-text-stroke:0">9</div>
<div class=t style="left:839px;top:165px;font-size:9.5px;line-height:9.5px;color:#333;-webkit-text-stroke:0">10</div>
<div class=t style="left:888px;top:165px;font-size:9.5px;line-height:9.5px;color:#333;-webkit-text-stroke:0">11</div>
<div class=t style="left:937px;top:165px;font-size:9.5px;line-height:9.5px;color:#333;-webkit-text-stroke:0">12</div>
<div class=t style="left:986px;top:165px;font-size:9.5px;line-height:9.5px;color:#333;-webkit-text-stroke:0">13</div>
<div class=t style="left:1036px;top:165px;font-size:9.5px;line-height:9.5px;color:#333;-webkit-text-stroke:0">14</div>
<div class=t style="left:1085px;top:165px;font-size:9.5px;line-height:9.5px;color:#333;-webkit-text-stroke:0">15</div>
<div class=t style="left:1134px;top:165px;font-size:9.5px;line-height:9.5px;color:#333;-webkit-text-stroke:0">16</div>
<div class=t style="left:1183px;top:165px;font-size:9.5px;line-height:9.5px;color:#333;-webkit-text-stroke:0">17</div>
<div class=t style="left:1232px;top:165px;font-size:9.5px;line-height:9.5px;color:#333;-webkit-text-stroke:0">18</div>
<div class=t style="left:7px;top:829px;font-size:11.5px;line-height:11.5px;color:#444">Página 1 de 1</div>
<div class=t style="left:97px;top:829px;font-size:11.5px;line-height:11.5px;color:#444">0 palabras</div>
<div class=t style="left:168px;top:829px;font-size:11.5px;line-height:11.5px;color:#444;letter-spacing:0.11px">Español (Argentina)</div>
<svg width="1468" height="846" viewBox="0 0 1468 846">
<circle cx="1439.2" cy="819.2" r="26" fill="#ffffff" fill-opacity="0.62" stroke="#dfe8f2" stroke-width="1.5"/>
<text x="1420.3" y="838" font-family="Liberation Sans" font-size="11.5" fill="#707070" letter-spacing="-0.3">130%</text>
<path d="M1440.2 830C1438 826 1433 823.5 1428.6 823C1424 822 1421.5 816 1421.7 810.6C1422 802 1430 796 1439.5 795.9C1447 796 1452.8 801 1452.6 808C1452.4 814 1448.5 818 1448 823C1447.8 826 1449.2 827.4 1449.2 827.4L1444 830.5C1442 832 1441 834 1440.5 836" fill="none" stroke="#4a88c7" stroke-width="1.8"/>
<path d="M1441 836.5C1446 835 1451 833 1454.6 833.5C1456 834 1454 838 1450 840C1447 841.5 1445 842.5 1443.5 843" fill="none" stroke="#4a88c7" stroke-width="1.8"/>
</svg>
</body></html>
